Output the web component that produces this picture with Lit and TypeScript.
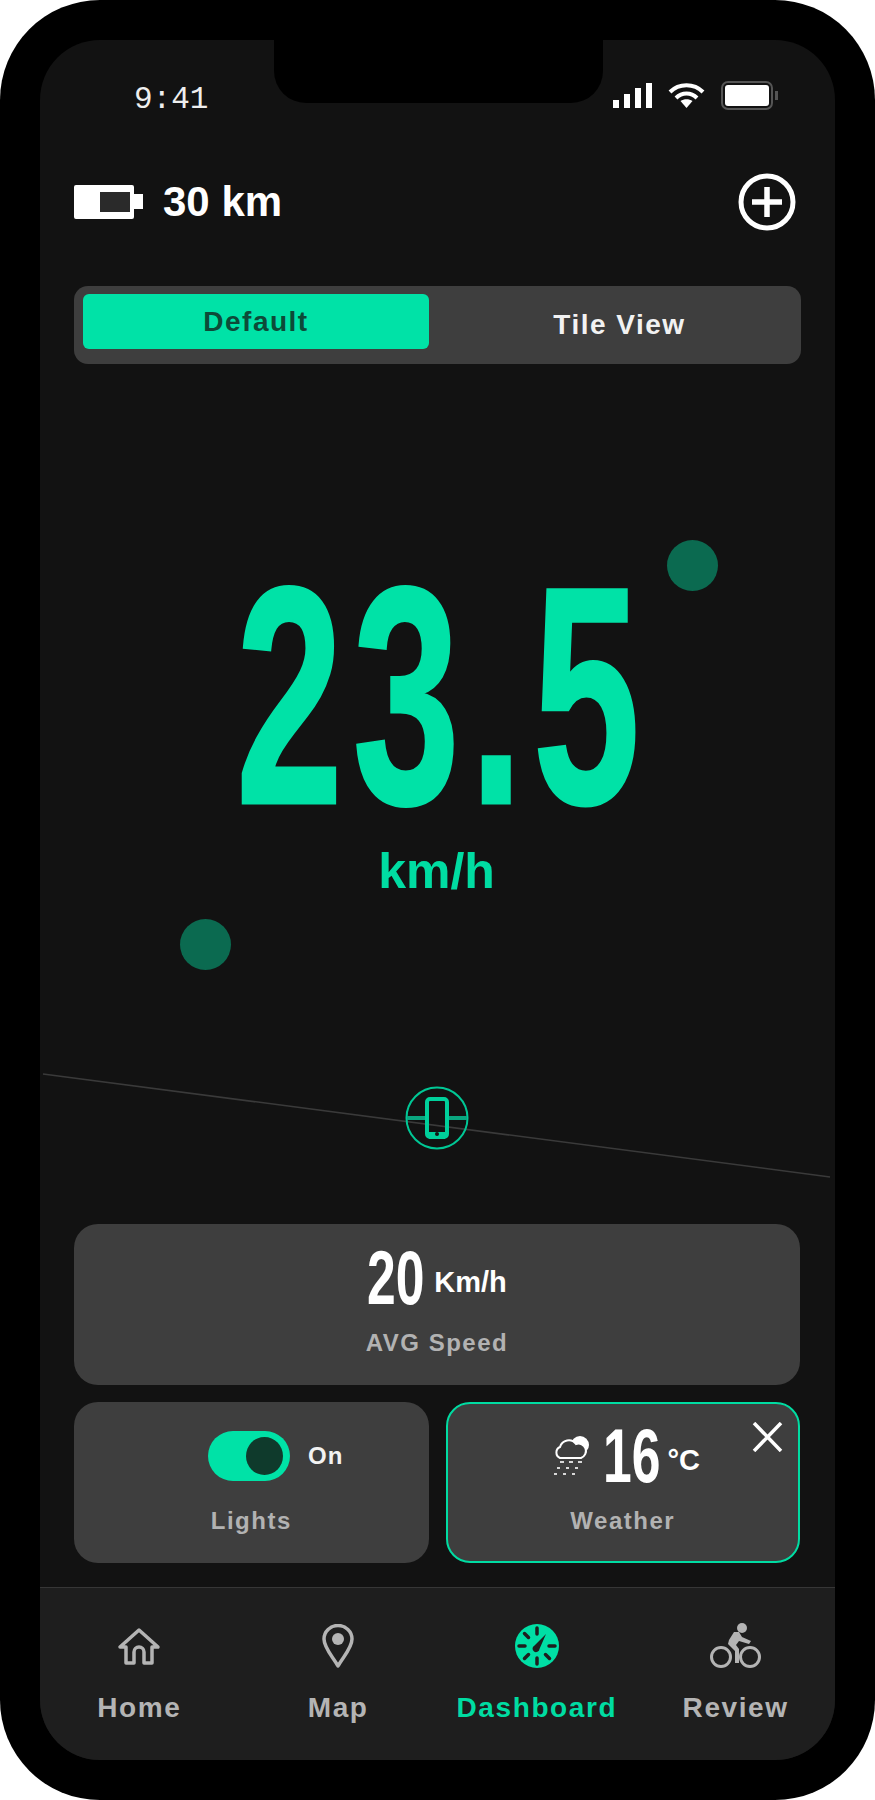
import { LitElement, html, css, svg } from "lit";
import { customElement } from "lit/decorators.js";

const homeIcon = svg`<svg width="44" height="41" viewBox="0 0 44 41" fill="none" stroke="#b4b4b4" stroke-width="3.500" stroke-linejoin="round">
  <path d="M22 3 L41 20 H35 V36 H27 V25 a5 5 0 0 0 -10 0 V36 H9 V20 H3 Z"/>
</svg>`;

const mapIcon = svg`<svg width="32" height="44" viewBox="0 0 32 44" fill="none">
  <path d="M16 42 C11 33 2 24 2 15 a14 13.500 0 0 1 28 0 C30 24 21 33 16 42 Z" stroke="#b4b4b4" stroke-width="3.500" stroke-linejoin="round"/>
  <circle cx="16" cy="15" r="6" fill="#b4b4b4"/>
</svg>`;

const dashIcon = svg`<svg width="44" height="44" viewBox="0 0 44 44">
  <circle cx="22" cy="22" r="22" fill="#00dfa5"/>
  <g stroke="#1e1e1e" stroke-width="3.500" stroke-linecap="round">
    <path d="M22 4 V10"/><path d="M22 34 V40"/><path d="M4 22 H10"/><path d="M34 22 H40"/>
    <path d="M9.500 9.500 L13.500 13.500"/><path d="M30.500 30.500 L34.500 34.500"/><path d="M9.500 34.500 L13.500 30.500"/>
  </g>
  <path d="M31 10 L24.500 25 a3.500 3.500 0 1 1 -5 -3.500 Z" fill="#1e1e1e"/>
</svg>`;

const bikeIcon = svg`<svg width="54" height="46" viewBox="0 0 54 46" fill="none">
  <circle cx="12" cy="35" r="9.500" stroke="#b4b4b4" stroke-width="3"/>
  <circle cx="41" cy="35" r="9.500" stroke="#b4b4b4" stroke-width="3"/>
  <circle cx="33" cy="6" r="5" fill="#b4b4b4"/>
  <path d="M20 18 L25 10 L30 10 L33 15 L42 19 L40 22 L30 19 L27 23 L30 27 L30 41 L26 41 L26 29 L19 22 Z" fill="#b4b4b4"/>
</svg>`;

const rainIcon = svg`<svg width="38" height="42" viewBox="0 0 38 42" fill="none">
  <circle cx="28" cy="10" r="9" fill="#fff"/>
  <path d="M8 23 a6 6 0 0 1 0 -11 a9 9 0 0 1 16 -3 a7 7 0 0 1 5 14 Z" fill="#3e3e3e" stroke="#fff" stroke-width="2"/>
  <g fill="#d8d8d8">
    <rect x="8" y="26" width="4" height="2"/><rect x="17" y="26" width="4" height="2"/><rect x="26" y="26" width="4" height="2"/>
    <rect x="5" y="32" width="3" height="2"/><rect x="14" y="32" width="3" height="2"/><rect x="23" y="32" width="3" height="2"/>
    <rect x="2" y="38" width="3" height="2"/><rect x="11" y="38" width="3" height="2"/><rect x="20" y="38" width="3" height="2"/>
  </g>
</svg>`;

@customElement("app-root")
export class AppRoot extends LitElement {
  static styles = css`
    :host {
      display: block;
      width: 875px;
      height: 1800px;
      background: #fff;
      font-family: "Liberation Sans", Arial, sans-serif;
    }

    .phone {
      box-sizing: border-box;
      width: 875px;
      height: 1800px;
      padding: 40px;
      background: #000;
      border-radius: 100px;
    }

    .screen {
      position: relative;
      display: flex;
      flex-direction: column;
      height: 1720px;
      background: #121212;
      border-radius: 60px;
      overflow: hidden;
    }

    .notch {
      position: absolute;
      left: 234px;
      top: 0;
      width: 329px;
      height: 63px;
      background: #000;
      border-radius: 0 0 32px 32px;
    }

    .status {
      display: flex;
      justify-content: space-between;
      align-items: center;
      height: 60px;
      padding: 30px 56px 0 94px;
    }

    .time {
      margin-top: -2px;
      font-family: "Liberation Mono", monospace;
      font-size: 31px;
      color: #eee;
    }

    .status-icons {
      display: flex;
      align-items: center;
      gap: 16px;
      margin-top: -8px;
    }

    .range-row {
      display: flex;
      justify-content: space-between;
      align-items: center;
      height: 64px;
      margin-top: 40px;
      padding: 0 39px 0 34px;
    }

    .range {
      display: flex;
      align-items: center;
      gap: 20px;
      font-size: 42px;
      font-weight: 700;
      color: #fff;
    }

    .segment {
      display: grid;
      grid-template-columns: 346px 1fr;
      box-sizing: border-box;
      height: 78px;
      margin: 52px 34px 0;
      padding: 8px 9px;
      background: #3e3e3e;
      border-radius: 14px;
      font-size: 28px;
      font-weight: 700;
      letter-spacing: 1.500px;
    }

    .seg-on {
      display: flex;
      align-items: center;
      justify-content: center;
      height: 55px;
      background: #00e2a7;
      border-radius: 6px;
      color: #0d4a38;
    }

    .seg-off {
      display: flex;
      align-items: center;
      justify-content: center;
      height: 62px;
      padding-left: 18px;
      color: #f2f2f2;
    }

    .stage {
      position: relative;
      flex: 1;
    }

    .speed {
      display: flex;
      flex-direction: column;
      align-items: center;
      padding-top: 195px;
    }

    /* no condensed face is installed, so the wide one gets squeezed */
    .big {
      width: 404px;
      height: 274px;
      font-size: 310px;
      font-weight: 700;
      line-height: 274px;
      letter-spacing: 16px;
      color: #00e2a7;
      -webkit-text-stroke: 3px #00e2a7;
      white-space: nowrap;
      transform-origin: left center;
      transform: scaleX(0.62);
    }

    .unit {
      margin-top: 9px;
      padding-right: 2px;
      font-size: 50px;
      font-weight: 700;
      line-height: 58px;
      color: #00dca2;
    }

    .dot {
      position: absolute;
      width: 51px;
      height: 51px;
      border-radius: 50%;
      background: #0b6a50;
    }

    .dot.a {
      left: 627px;
      top: 176px;
    }

    .dot.b {
      left: 140px;
      top: 555px;
    }

    .slope {
      position: absolute;
      left: 0;
      top: 701px;
    }

    .badge {
      position: absolute;
      left: 365px;
      top: 722px;
    }

    .cards {
      display: grid;
      grid-template-columns: 1fr 1fr;
      gap: 17px;
      padding: 0 35px 0 34px;
    }

    .card {
      box-sizing: border-box;
      position: relative;
      display: flex;
      flex-direction: column;
      align-items: center;
      height: 161px;
      padding-top: 11px;
      background: #3e3e3e;
      border-radius: 24px;
    }

    .card.wide {
      grid-column: span 2;
    }

    .card.picked {
      padding-top: 9px;
      border: 2px solid #00dca2;
    }

    .reading {
      display: flex;
      align-items: center;
      justify-content: center;
      height: 86px;
      margin-bottom: 8px;
      color: #fff;
      font-weight: 700;
    }

    .cond {
      font-size: 76px;
      font-weight: 700;
      line-height: 86px;
      white-space: nowrap;
      transform-origin: left center;
      transform: scaleX(0.68);
    }

    .w20 {
      width: 58px;
      margin-right: 9px;
    }

    .w16 {
      width: 56px;
      margin: 0 8px 0 13px;
    }

    .small-unit {
      margin-top: 8px;
      font-size: 29px;
    }

    .weather-row {
      padding-left: 7px;
    }

    .label {
      font-size: 24px;
      font-weight: 700;
      letter-spacing: 1.500px;
      color: #b2b2b2;
    }

    .toggle {
      display: flex;
      align-items: center;
      justify-content: flex-end;
      box-sizing: border-box;
      width: 82px;
      height: 50px;
      padding-right: 7px;
      background: #00e2a7;
      border-radius: 25px;
    }

    .knob {
      width: 37px;
      height: 38px;
      background: #0f3a2c;
      border-radius: 50%;
    }

    .on {
      margin-left: 18px;
      font-size: 24px;
      letter-spacing: 1px;
      color: #f2f2f2;
    }

    .light-row {
      margin-left: 49px;
    }

    .close {
      position: absolute;
      top: 18px;
      right: 15px;
    }

    nav {
      display: grid;
      grid-template-columns: repeat(4, 1fr);
      box-sizing: border-box;
      height: 173px;
      margin-top: 24px;
      background: #1e1e1e;
      border-top: 1px solid #363636;
    }

    .tab {
      display: flex;
      flex-direction: column;
      align-items: center;
      font-size: 28px;
      font-weight: 700;
      letter-spacing: 1.600px;
      color: #b4b4b4;
    }

    .tab.active {
      color: #00dca2;
    }

    .tab-icon {
      display: flex;
      align-items: flex-end;
      justify-content: center;
      height: 80px;
      margin-bottom: 24px;
    }
  `;

  render() {
    return html`
      <div class="phone">
        <div class="screen">
          <div class="notch"></div>

          <div class="status">
            <span class="time">9:41</span>
            <div class="status-icons">
              <svg width="39" height="26" viewBox="0 0 39 26" fill="#fff">
                <rect x="0" y="17" width="6" height="8"/>
                <rect x="11" y="11" width="6" height="14"/>
                <rect x="22" y="5" width="6" height="20"/>
                <rect x="33" y="0" width="6" height="25"/>
              </svg>
              <svg width="37" height="26" viewBox="0 0 37 26" fill="none" stroke="#fff" stroke-width="4">
                <path d="M2 9 C11 0 26 0 35 9"/>
                <path d="M8 15 C14 9 23 9 29 15"/>
                <path d="M18.500 25 L12.500 18 C16 15.500 21 15.500 24.500 18 Z" fill="#fff" stroke="none"/>
              </svg>
              <svg width="58" height="30" viewBox="0 0 58 30">
                <rect x="1" y="1" width="50" height="27" rx="6" fill="none" stroke="#555" stroke-width="2"/>
                <rect x="4" y="4" width="44" height="21" rx="3" fill="#fff"/>
                <rect x="54" y="10" width="3" height="9" fill="#555"/>
              </svg>
            </div>
          </div>

          <div class="range-row">
            <div class="range">
              <svg width="69" height="34" viewBox="0 0 69 34">
                <path d="M0 2 a2 2 0 0 1 2 -2 H58 a2 2 0 0 1 2 2 V9 H69 V24 H60 V32 a2 2 0 0 1 -2 2 H2 a2 2 0 0 1 -2 -2 Z" fill="#fff"/>
                <rect x="26" y="7" width="30" height="20" fill="#2a2a2a"/>
              </svg>
              <span>30 km</span>
            </div>
            <svg width="58" height="58" viewBox="0 0 58 58" fill="none" stroke="#fff">
              <circle cx="29" cy="29" r="26" stroke-width="5"/>
              <path d="M14 29 H44 M29 14 V44" stroke-width="5.500"/>
            </svg>
          </div>

          <div class="segment">
            <div class="seg-on">Default</div>
            <div class="seg-off">Tile View</div>
          </div>

          <div class="stage">
            <div class="speed">
              <div class="big">23.5</div>
              <div class="unit">km/h</div>
            </div>
            <div class="dot a"></div>
            <div class="dot b"></div>
            <svg class="slope" width="795" height="120" viewBox="0 0 795 120">
              <line x1="3" y1="9" x2="790" y2="112" stroke="#3a3a3a" stroke-width="1.500"/>
            </svg>
            <svg class="badge" width="64" height="64" viewBox="0 0 64 64" fill="none">
              <circle cx="32" cy="32" r="30.500" stroke="#00c795" stroke-width="2"/>
              <path d="M2 32 H21 M43 32 H62" stroke="#0aa67f" stroke-width="4"/>
              <rect x="22" y="13" width="20" height="38" rx="3" stroke="#00d09b" stroke-width="4"/>
              <rect x="24" y="46" width="16" height="7" fill="#00d09b"/>
              <circle cx="32" cy="48" r="2" fill="#121212"/>
            </svg>
          </div>

          <div class="cards">
            <div class="card wide">
              <div class="reading">
                <span class="cond w20">20</span>
                <span class="small-unit">Km/h</span>
              </div>
              <div class="label">AVG Speed</div>
            </div>
            <div class="card">
              <div class="reading light-row">
                <div class="toggle"><div class="knob"></div></div>
                <span class="on">On</span>
              </div>
              <div class="label">Lights</div>
            </div>
            <div class="card picked">
              <div class="reading weather-row">
                ${rainIcon}
                <span class="cond w16">16</span>
                <span class="small-unit">°C</span>
              </div>
              <div class="label">Weather</div>
              <svg class="close" width="31" height="30" viewBox="0 0 31 30" stroke="#fff" stroke-width="3.500">
                <path d="M2 1 L29 29 M29 1 L2 29"/>
              </svg>
            </div>
          </div>

          <nav>
            <div class="tab"><div class="tab-icon">${homeIcon}</div>Home</div>
            <div class="tab"><div class="tab-icon">${mapIcon}</div>Map</div>
            <div class="tab active"><div class="tab-icon">${dashIcon}</div>Dashboard</div>
            <div class="tab"><div class="tab-icon">${bikeIcon}</div>Review</div>
          </nav>
        </div>
      </div>
    `;
  }
}
